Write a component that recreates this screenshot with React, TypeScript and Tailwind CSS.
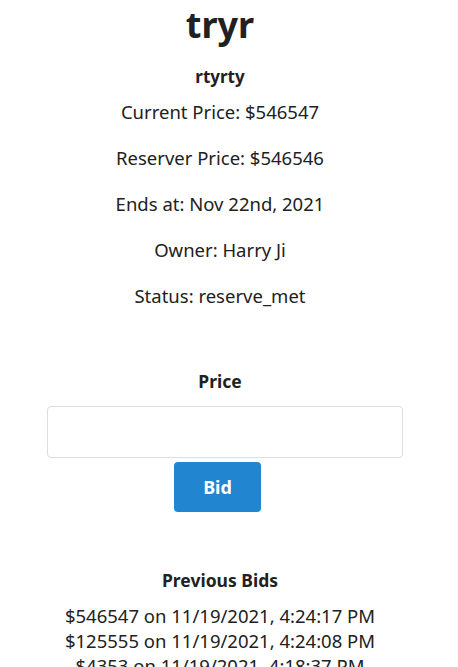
export default function App() {
  const bids = [
    "$546547 on 11/19/2021, 4:24:17 PM",
    "$125555 on 11/19/2021, 4:24:08 PM",
    "$4353 on 11/19/2021, 4:18:37 PM",
  ];
  return (
    <div
      className="w-[440px] flex flex-col items-center text-[#212121] bg-white min-h-screen"
      style={{ fontFamily: '"Noto Sans", "Open Sans", sans-serif' }}
    >
      <h1 className="text-[36px] font-bold leading-[50px] mt-0">tryr</h1>
      <h3 className="text-[17px] font-bold leading-[24px] mt-[15px]">rtyrty</h3>
      <div className="flex flex-col items-center text-[18.5px] leading-[26px] mt-[10px] gap-[20px]">
        <p>Current Price: $546547</p>
        <p>Reserver Price: $546546</p>
        <p>Ends at: Nov 22nd, 2021</p>
        <p>Owner: Harry Ji</p>
        <p>Status: reserve_met</p>
      </div>
      <div className="flex flex-col items-center mt-[60px]">
        <label className="text-[17.5px] font-bold leading-[24px]">Price</label>
        <input
          type="text"
          className="mt-[13px] ml-[10px] w-[356px] h-[52px] border border-[#dedede] rounded-[4px] px-3 outline-none"
        />
        <button className="mt-[4px] mr-[5px] w-[87px] h-[50px] bg-[#2185d0] text-white text-[18px] font-bold rounded-[4px]">
          Bid
        </button>
      </div>
      <h3 className="text-[17.5px] font-bold leading-[24px] mt-[56px]">Previous Bids</h3>
      <div className="flex flex-col items-center text-[18.5px] leading-[25px] mt-[11px]">
        {bids.map((b) => (
          <div key={b}>{b}</div>
        ))}
      </div>
    </div>
  );
}
